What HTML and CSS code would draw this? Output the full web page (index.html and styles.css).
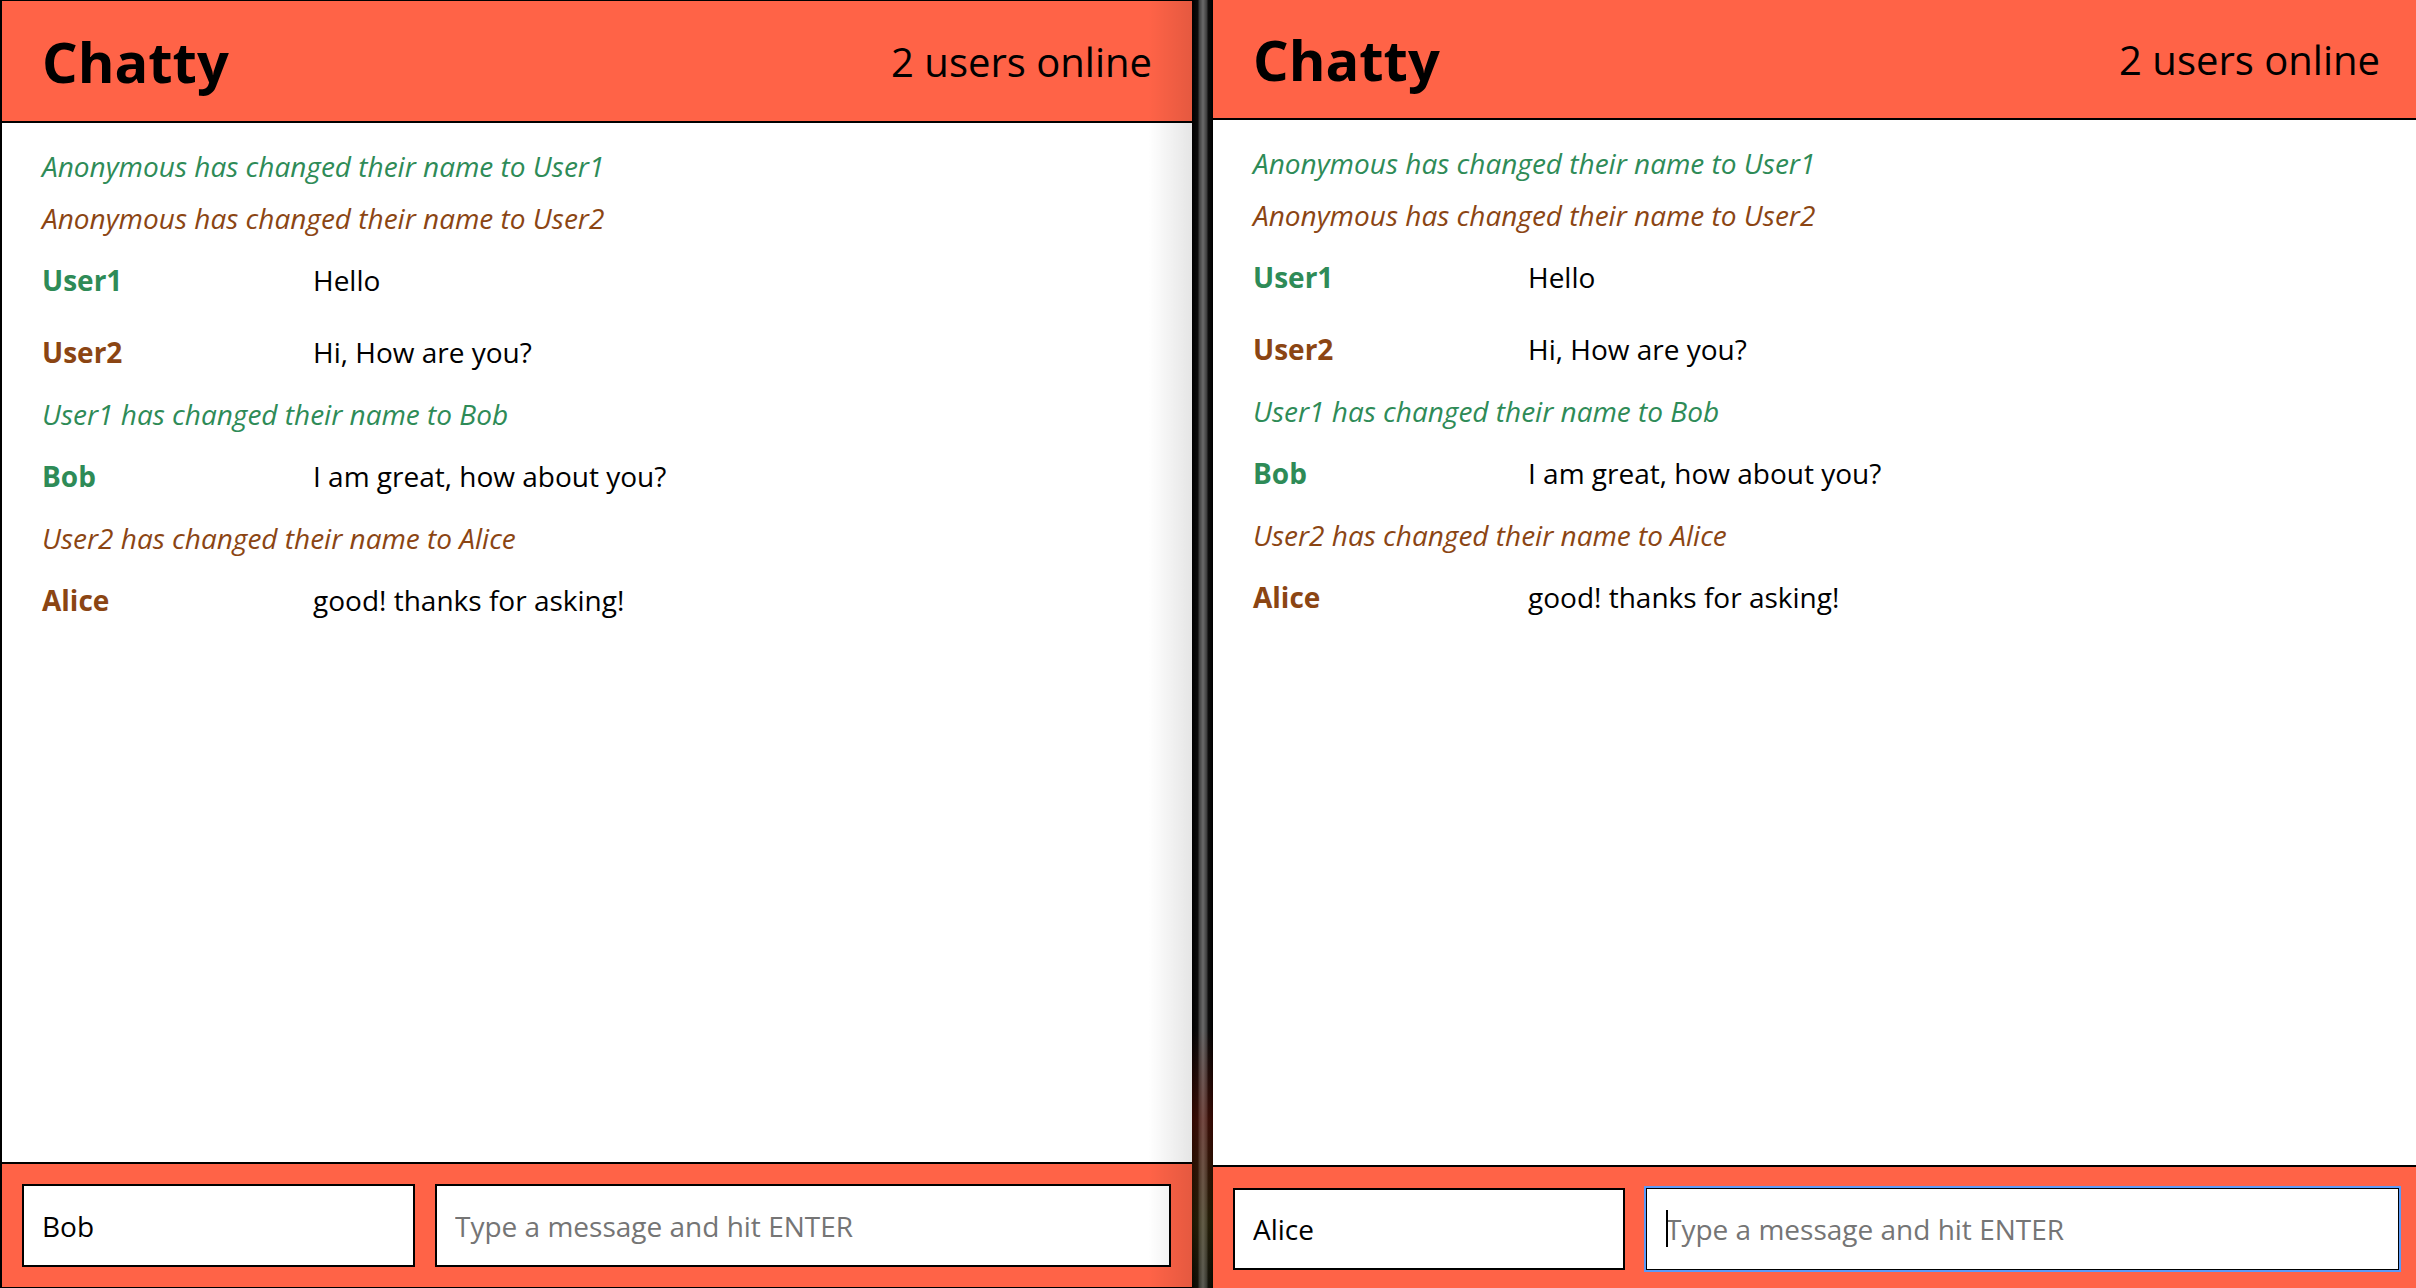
FILE: index.html
```html
<!DOCTYPE html>
<html lang="en">
<head>
<meta charset="utf-8">
<title>Chatty</title>
<link rel="stylesheet" href="styles.css">
</head>
<body>
<div class="desktop">
  <section class="window window--left">
    <nav class="navbar">
      <span class="brand">Chatty</span>
      <span class="online">2 users online</span>
    </nav>
    <main class="messages">
      <div class="system green">Anonymous has changed their name to User1</div>
      <div class="system brown">Anonymous has changed their name to User2</div>
      <div class="message"><span class="username green">User1</span><span class="content">Hello</span></div>
      <div class="message"><span class="username brown">User2</span><span class="content">Hi, How are you?</span></div>
      <div class="system green">User1 has changed their name to Bob</div>
      <div class="message"><span class="username green">Bob</span><span class="content">I am great, how about you?</span></div>
      <div class="system brown">User2 has changed their name to Alice</div>
      <div class="message"><span class="username brown">Alice</span><span class="content">good! thanks for asking!</span></div>
    </main>
    <footer class="chatbar">
      <input class="chatbar-username" type="text" value="Bob">
      <div class="field">
        <input class="chatbar-message" type="text" placeholder="Type a message and hit ENTER">
      </div>
    </footer>
    <div class="shade"></div>
  </section>

  <div class="divider"></div>

  <section class="window window--right">
    <nav class="navbar">
      <span class="brand">Chatty</span>
      <span class="online">2 users online</span>
    </nav>
    <main class="messages">
      <div class="system green">Anonymous has changed their name to User1</div>
      <div class="system brown">Anonymous has changed their name to User2</div>
      <div class="message"><span class="username green">User1</span><span class="content">Hello</span></div>
      <div class="message"><span class="username brown">User2</span><span class="content">Hi, How are you?</span></div>
      <div class="system green">User1 has changed their name to Bob</div>
      <div class="message"><span class="username green">Bob</span><span class="content">I am great, how about you?</span></div>
      <div class="system brown">User2 has changed their name to Alice</div>
      <div class="message"><span class="username brown">Alice</span><span class="content">good! thanks for asking!</span></div>
    </main>
    <footer class="chatbar">
      <input class="chatbar-username" type="text" value="Alice">
      <div class="field">
        <input class="chatbar-message is-focused" type="text" placeholder="Type a message and hit ENTER">
        <span class="caret"></span>
      </div>
    </footer>
  </section>
</div>
</body>
</html>
```

FILE: styles.css
```css
* {
  box-sizing: border-box;
}

html,
body {
  margin: 0;
  height: 100%;
}

body {
  font-family: "Open Sans", "Noto Sans", sans-serif;
  background: #000;
  overflow: hidden;
}

.desktop {
  display: flex;
  height: 1288px;
}

.window {
  position: relative;
  display: flex;
  flex-direction: column;
  height: 100%;
  background: #fff;
}

.window--left {
  width: 1192px;
  flex: none;
  border-left: 2px solid #000;
  border-top: 1px solid #000;
  border-bottom: 1px solid #000;
}

.window--right {
  flex: 1;
  min-width: 0;
}

.navbar {
  display: flex;
  align-items: center;
  justify-content: space-between;
  height: 122px;
  flex: none;
  padding: 0 40px;
  background: #ff6347;
  border-bottom: 2px solid #000;
  color: #000;
}

.window--right .navbar {
  height: 120px;
  padding: 0 36px 0 40px;
}

.brand {
  font-size: 56px;
  font-weight: 700;
}

.online {
  font-size: 40px;
  font-weight: 400;
}

.messages {
  flex: 1;
  padding: 25px 40px 0;
  font-size: 28px;
  line-height: 36px;
  color: #000;
}

.system {
  font-style: italic;
  padding-bottom: 16px;
}

.message {
  display: flex;
  padding: 10px 0 26px;
}

.username {
  width: 271px;
  flex: none;
  font-weight: 700;
}

.window--right .username {
  width: 275px;
}

.green {
  color: #2e8b57;
}

.brown {
  color: #8b4513;
}

.chatbar {
  display: flex;
  gap: 20px;
  height: 125px;
  flex: none;
  padding: 20px 21px 20px 20px;
  background: #ff6347;
  border-top: 2px solid #000;
}

.window--right .chatbar {
  height: 123px;
  gap: 21px;
  padding: 21px 17px 18px 20px;
}

.chatbar input {
  height: 100%;
  margin: 0;
  border: 2px solid #000;
  border-radius: 0;
  padding: 0 18px;
  background: #fff;
  font-family: "Open Sans", "Noto Sans", sans-serif;
  font-size: 28px;
  color: #000;
  outline: none;
}

.chatbar-username {
  width: 393px;
  flex: none;
}

.window--right .chatbar-username {
  width: 392px;
}

.field {
  position: relative;
  flex: 1;
  display: flex;
}

.chatbar-message {
  flex: 1;
  width: 100%;
}

.chatbar-message::placeholder {
  color: #757575;
  opacity: 1;
}

.chatbar .chatbar-message.is-focused {
  border-width: 1px;
  padding-left: 19px;
  box-shadow: 0 0 0 2px #5b9af8;
}

.caret {
  position: absolute;
  left: 20px;
  top: 22px;
  width: 2px;
  height: 37px;
  background: #000;
}

.shade {
  position: absolute;
  top: 0;
  right: 0;
  bottom: 0;
  width: 44px;
  background: linear-gradient(to right, rgba(0, 0, 0, 0), rgba(0, 0, 0, 0.1));
  pointer-events: none;
}

.divider {
  width: 21px;
  flex: none;
  height: 100%;
  background:
    linear-gradient(to bottom, rgba(0, 0, 0, 0) 80%, rgba(140, 20, 0, 0.35) 87%, rgba(90, 70, 0, 0.3) 95%, rgba(40, 40, 0, 0.2) 100%),
    linear-gradient(to right, #000 0, #0d0d0d 6px, #3a3a3a 7px, #6a6a6a 11px, #3a3a3a 15px, #0d0d0d 16px, #000 21px);
}
```
